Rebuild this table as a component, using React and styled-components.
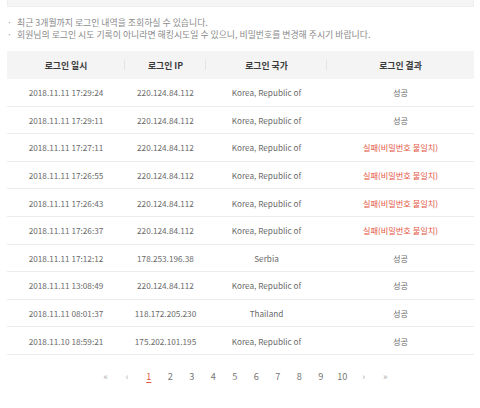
import React from "react";
import styled, { createGlobalStyle } from "styled-components";

const Global = createGlobalStyle`
  html, body { margin: 0; padding: 0; background: #fff; }
  body { font-family: "Noto Sans CJK KR", "Noto Sans", sans-serif; color: #666; }
`;

const Page = styled.div`
  width: 480px;
  height: 408px;
  padding: 0 6px 0 7px;
  box-sizing: border-box;
  overflow: hidden;
`;

const TopBox = styled.div`
  height: 6px;
  background: #f5f5f5;
  border: 1px solid #efefef;
  border-top: none;
`;

const Notes = styled.ul`
  list-style: none;
  margin: 10px 0 0;
  padding: 0;
  font-size: 8.9px;
  line-height: 12px;
  color: #8a8a8a;
`;

const Note = styled.li`
  display: flex;
  gap: 5px;
  &::before { content: "·"; color: #999; }
`;

const Table = styled.table`
  width: 100%;
  margin-top: 10px;
  border-collapse: collapse;
  table-layout: fixed;
  font-size: 8.2px;
`;

const Th = styled.th`
  height: 28px;
  padding: 0;
  background: #f4f4f4;
  color: #3a3a3a;
  font-weight: 700;
  font-size: 8.8px;
  position: relative;
  &:not(:last-child)::after {
    content: "";
    position: absolute;
    right: 0;
    top: 9px;
    height: 10px;
    border-right: 1px solid #e4e4e4;
  }
`;

const Td = styled.td`
  height: 26.6px;
  padding: 0;
  text-align: center;
  color: ${(p) => (p.$fail ? "#e4553f" : "#6a6a6a")};
  border-bottom: 1px solid #ececec;
  white-space: nowrap;
`;

const Pager = styled.nav`
  display: flex;
  justify-content: center;
  margin-top: 14px;
  margin-left: 10px;
  font-size: 9.2px;
`;

const PageItem = styled.span`
  width: 21.5px;
  text-align: center;
  color: ${(p) => (p.$active ? "#e4553f" : p.$arrow ? "#aaa" : "#777")};
  text-decoration: ${(p) => (p.$active ? "underline" : "none")};
  text-underline-offset: 2px;
`;

const rows = [
  ["2018.11.11 17:29:24", "220.124.84.112", "Korea, Republic of", "성공"],
  ["2018.11.11 17:29:11", "220.124.84.112", "Korea, Republic of", "성공"],
  ["2018.11.11 17:27:11", "220.124.84.112", "Korea, Republic of", "실패(비밀번호 불일치)"],
  ["2018.11.11 17:26:55", "220.124.84.112", "Korea, Republic of", "실패(비밀번호 불일치)"],
  ["2018.11.11 17:26:43", "220.124.84.112", "Korea, Republic of", "실패(비밀번호 불일치)"],
  ["2018.11.11 17:26:37", "220.124.84.112", "Korea, Republic of", "실패(비밀번호 불일치)"],
  ["2018.11.11 17:12:12", "178.253.196.38", "Serbia", "성공"],
  ["2018.11.11 13:08:49", "220.124.84.112", "Korea, Republic of", "성공"],
  ["2018.11.11 08:01:37", "118.172.205.230", "Thailand", "성공"],
  ["2018.11.10 18:59:21", "175.202.101.195", "Korea, Republic of", "성공"],
];

const pages = ["«", "‹", "1", "2", "3", "4", "5", "6", "7", "8", "9", "10", "›", "»"];
const arrows = ["«", "‹", "›", "»"];

export default function App() {
  return (
    <Page>
      <Global />
      <TopBox />
      <Notes>
        <Note>최근 3개월까지 로그인 내역을 조회하실 수 있습니다.</Note>
        <Note>회원님의 로그인 시도 기록이 아니라면 해킹시도일 수 있으니, 비밀번호를 변경해 주시기 바랍니다.</Note>
      </Notes>
      <Table>
        <colgroup>
          <col style={{ width: 118 }} />
          <col style={{ width: 81 }} />
          <col style={{ width: 121 }} />
          <col />
        </colgroup>
        <thead>
          <tr>
            <Th>로그인 일시</Th>
            <Th>로그인 IP</Th>
            <Th>로그인 국가</Th>
            <Th>로그인 결과</Th>
          </tr>
        </thead>
        <tbody>
          {rows.map((r, i) => (
            <tr key={i}>
              <Td>{r[0]}</Td>
              <Td>{r[1]}</Td>
              <Td>{r[2]}</Td>
              <Td $fail={r[3] !== "성공"}>{r[3]}</Td>
            </tr>
          ))}
        </tbody>
      </Table>
      <Pager>
        {pages.map((p, i) => (
          <PageItem key={i} $active={p === "1"} $arrow={arrows.includes(p)}>{p}</PageItem>
        ))}
      </Pager>
    </Page>
  );
}
